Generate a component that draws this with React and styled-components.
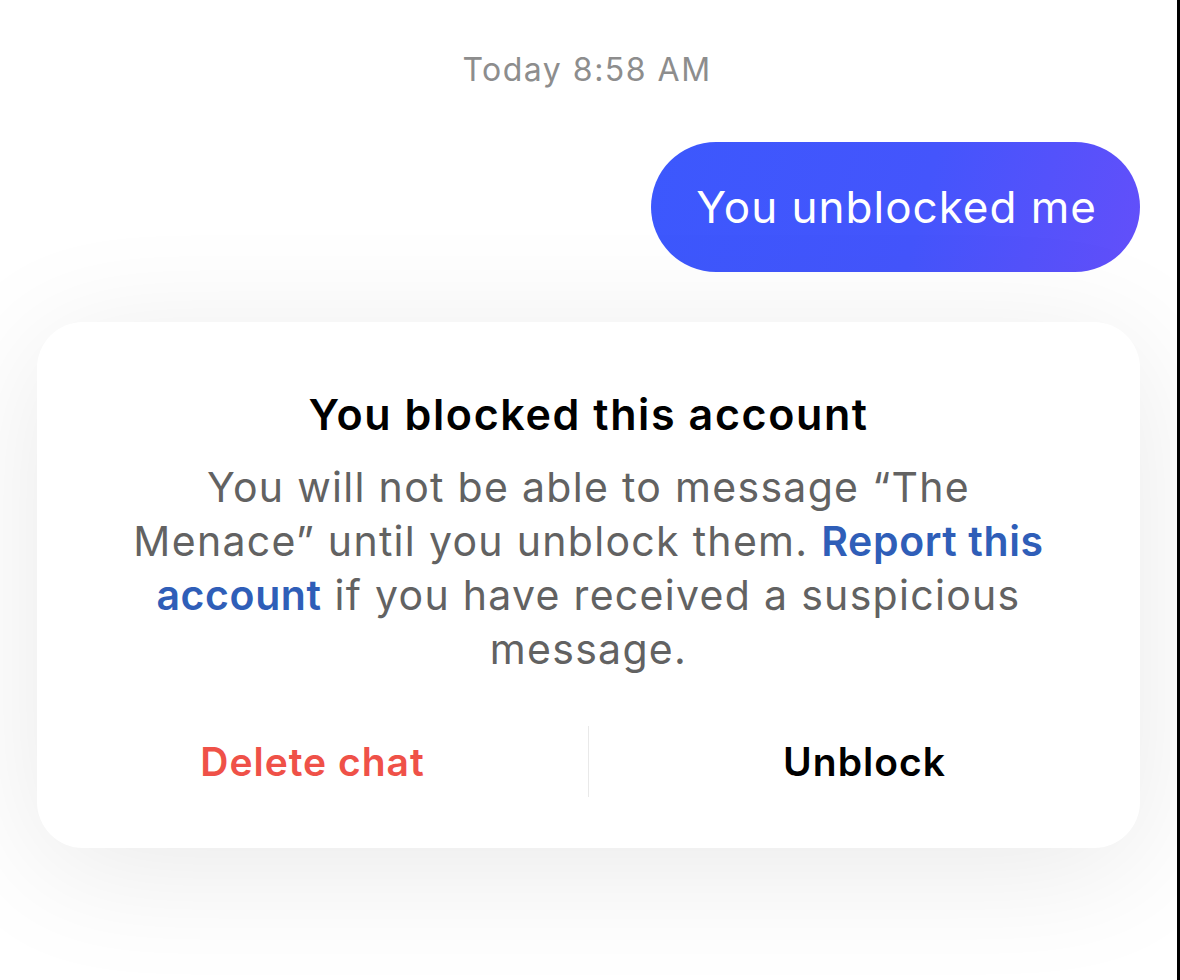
import React from 'react'
import styled, { createGlobalStyle } from 'styled-components'

const GlobalStyle = createGlobalStyle`
  html, body {
    margin: 0;
    padding: 0;
    background: #fff;
  }
  body {
    font-family: Inter, "Noto Sans", "Liberation Sans", sans-serif;
    -webkit-font-smoothing: antialiased;
  }
`

const Page = styled.div`
  width: 1180px;
  height: 980px;
  box-sizing: border-box;
  border-right: 3px solid #000;
  background: #fff;
  display: flex;
  flex-direction: column;
  overflow: hidden;
`

const Timestamp = styled.div`
  margin-top: 50px;
  text-align: center;
  font-size: 32px;
  line-height: 40px;
  letter-spacing: 1.5px;
  color: #8d8d8d;
  padding-right: 3px;
`

const BubbleRow = styled.div`
  display: flex;
  justify-content: flex-end;
  margin-top: 52px;
  padding-right: 37px;
`

const Bubble = styled.div`
  height: 130px;
  display: flex;
  align-items: center;
  padding: 0 43px 0 45px;
  border-radius: 65px;
  background: linear-gradient(105deg, #3c58fd 0%, #4455fc 55%, #634ffa 100%);
  color: #fff;
  font-size: 44px;
  letter-spacing: 1px;
`

const Card = styled.div`
  margin: 50px 37px 0 37px;
  background: #fff;
  border-radius: 46px;
  box-shadow: 0 20px 130px rgba(0, 0, 0, 0.09);
  padding: 67px 60px 51px;
  display: flex;
  flex-direction: column;
  align-items: center;
`

const Title = styled.h2`
  margin: 0;
  font-size: 43px;
  line-height: 50px;
  font-weight: 600;
  color: #000;
  letter-spacing: 1.6px;
`

const Body = styled.p`
  margin: 21px 0 0;
  font-size: 41px;
  line-height: 54px;
  letter-spacing: 1.3px;
  color: #626262;
  text-align: center;
  max-width: 935px;
`

const Link = styled.span`
  color: #2f5eb8;
  font-weight: 600;
  letter-spacing: 0.6px;
`

const Actions = styled.div`
  margin-top: 50px;
  align-self: stretch;
  margin-left: -60px;
  margin-right: -60px;
  display: flex;
  height: 71px;
`

const Action = styled.div`
  flex: 1;
  display: flex;
  align-items: center;
  justify-content: center;
  font-size: 39px;
  font-weight: 600;
  letter-spacing: 1px;
  color: ${(p) => (p.danger ? '#ef5148' : '#000')};
`

const Divider = styled.div`
  width: 1px;
  background: #e9e9e9;
`

function App() {
  return (
    <>
      <GlobalStyle />
      <Page>
        <Timestamp>Today 8:58 AM</Timestamp>
        <BubbleRow>
          <Bubble>You unblocked me</Bubble>
        </BubbleRow>
        <Card>
          <Title>You blocked this account</Title>
          <Body>
            You will not be able to message “The Menace” until you unblock them.{' '}
            <Link>Report this account</Link> if you have received a suspicious message.
          </Body>
          <Actions>
            <Action danger>Delete chat</Action>
            <Divider />
            <Action>Unblock</Action>
          </Actions>
        </Card>
      </Page>
    </>
  )
}

export default App
